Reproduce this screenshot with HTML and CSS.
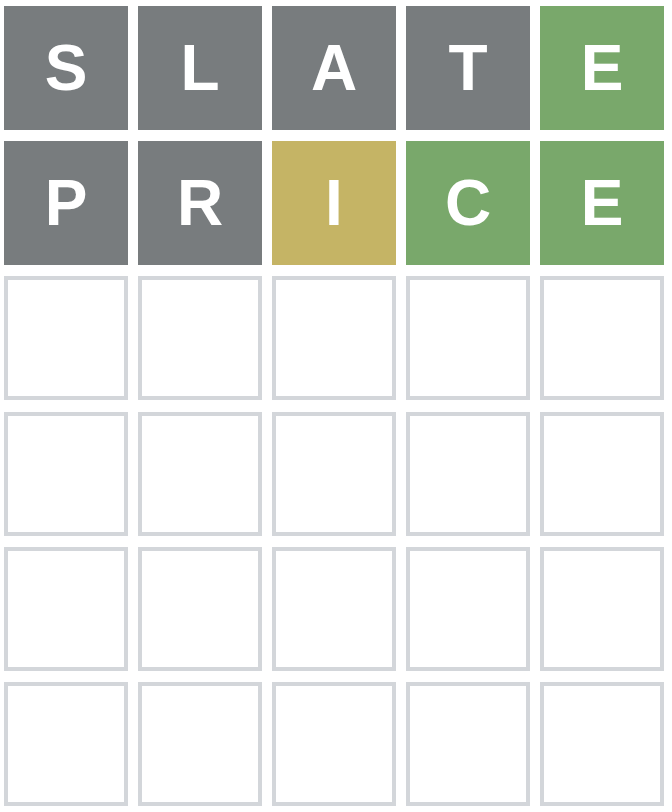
FILE: index.html
```html
<!DOCTYPE html>
<html lang="en">
<head>
<meta charset="utf-8">
<title>Wordle board</title>
<link rel="stylesheet" href="styles.css">
</head>
<body>
<div class="board">
  <div class="tile absent">S</div>
  <div class="tile absent">L</div>
  <div class="tile absent">A</div>
  <div class="tile absent">T</div>
  <div class="tile correct">E</div>

  <div class="tile absent">P</div>
  <div class="tile absent">R</div>
  <div class="tile present">I</div>
  <div class="tile correct">C</div>
  <div class="tile correct">E</div>

  <div class="tile empty"></div><div class="tile empty"></div><div class="tile empty"></div><div class="tile empty"></div><div class="tile empty"></div>
  <div class="tile empty"></div><div class="tile empty"></div><div class="tile empty"></div><div class="tile empty"></div><div class="tile empty"></div>
  <div class="tile empty"></div><div class="tile empty"></div><div class="tile empty"></div><div class="tile empty"></div><div class="tile empty"></div>
  <div class="tile empty"></div><div class="tile empty"></div><div class="tile empty"></div><div class="tile empty"></div><div class="tile empty"></div>
</div>
</body>
</html>
```

FILE: styles.css
```css
html, body {
  margin: 0;
  padding: 0;
  background: #ffffff;
}

.board {
  display: grid;
  grid-template-columns: repeat(5, 124px);
  grid-auto-rows: 124px;
  column-gap: 10px;
  row-gap: 11.2px;
  padding: 6px 8px 6px 4px;
  width: max-content;
}

.tile {
  box-sizing: border-box;
  display: flex;
  align-items: center;
  justify-content: center;
  font-family: "Liberation Sans", Arial, sans-serif;
  font-weight: 700;
  font-size: 64px;
  line-height: 1;
  color: #ffffff;
}

.absent {
  background: #787c7e;
}

.correct {
  background: #79a86b;
}

.present {
  background: #c5b465;
}

.empty {
  border: 4px solid #d3d6da;
  background: #ffffff;
}
```
